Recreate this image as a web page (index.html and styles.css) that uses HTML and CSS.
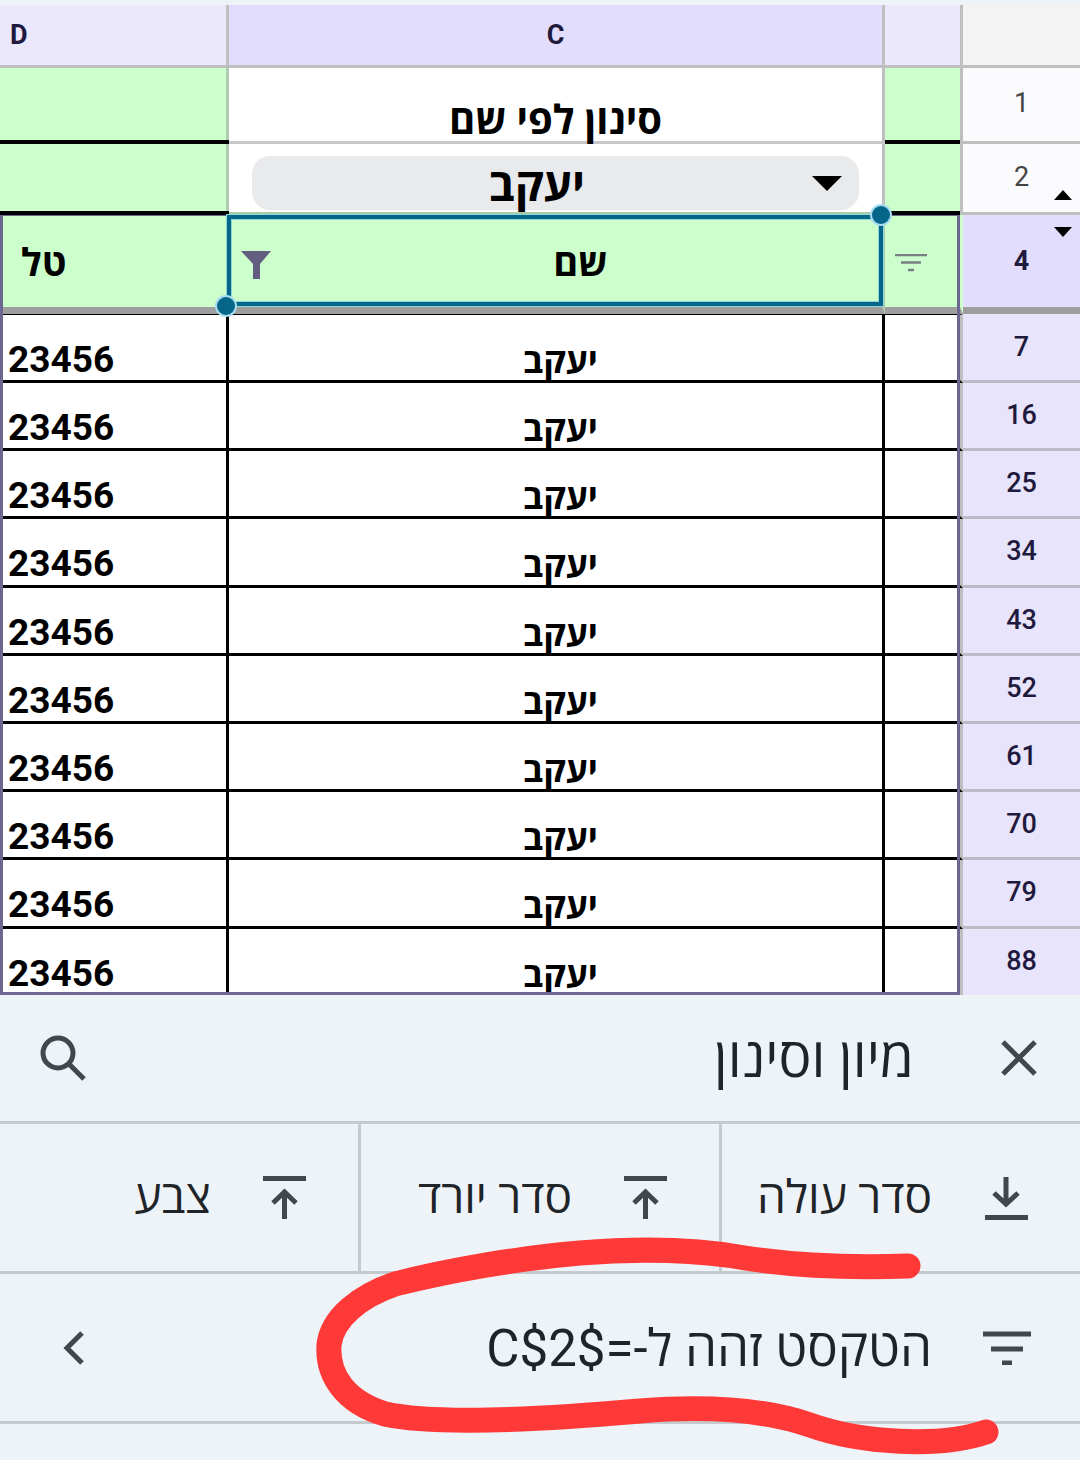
FILE: index.html
```html
<!DOCTYPE html>
<html lang="he">
<head>
    <meta charset="UTF-8">
    <meta name="viewport" content="width=device-width, initial-scale=1.0">
    <title>Sheet - Sort and filter</title>
    <link rel="stylesheet" href="styles.css">
</head>
<body>
<div class="page">
    <section class="sheet">
        <div class="row row-head">
            <div class="cell col-head head-light"><span class="col-letter letter-d">D</span></div>
            <div class="cell col-head head-active"><span class="col-letter">C</span></div>
            <div class="cell col-head head-light"></div>
            <div class="cell col-head corner"></div>
        </div>

        <div class="row row-1">
            <div class="cell green thick"></div>
            <div class="cell title-cell">סינון לפי שם</div>
            <div class="cell green thick"></div>
            <div class="cell num plain"><span>1</span></div>
        </div>

        <div class="row row-2">
            <div class="cell green thick"></div>
            <div class="cell picker-cell">
                <div class="picker">
                    <span class="picker-text">יעקב</span>
                    <span class="picker-arrow"></span>
                </div>
            </div>
            <div class="cell green thick"></div>
            <div class="cell num plain"><span>2</span><i class="hidden-up"></i></div>
        </div>

        <div class="row row-4">
            <div class="cell green head-cell label-tel">טל</div>
            <div class="cell green head-cell label-name">
                <svg class="funnel" viewBox="0 0 30 28"><path d="M0 0h30L19 13v15h-7V13z"/></svg>
                שם
            </div>
            <div class="cell green head-cell label-filter">
                <svg class="filter-small" viewBox="0 0 32 20"><path d="M0 1h32M6 8.500h20M13 16h6"/></svg>
            </div>
            <div class="cell num active"><span>4</span><i class="hidden-down"></i></div>
        </div>

        <div class="data">
            <div class="row data-row"><div class="cell tel">23456</div><div class="cell name">יעקב</div><div class="cell"></div><div class="cell num"><span>7</span></div></div>
            <div class="row data-row"><div class="cell tel">23456</div><div class="cell name">יעקב</div><div class="cell"></div><div class="cell num"><span>16</span></div></div>
            <div class="row data-row"><div class="cell tel">23456</div><div class="cell name">יעקב</div><div class="cell"></div><div class="cell num"><span>25</span></div></div>
            <div class="row data-row"><div class="cell tel">23456</div><div class="cell name">יעקב</div><div class="cell"></div><div class="cell num"><span>34</span></div></div>
            <div class="row data-row"><div class="cell tel">23456</div><div class="cell name">יעקב</div><div class="cell"></div><div class="cell num"><span>43</span></div></div>
            <div class="row data-row"><div class="cell tel">23456</div><div class="cell name">יעקב</div><div class="cell"></div><div class="cell num"><span>52</span></div></div>
            <div class="row data-row"><div class="cell tel">23456</div><div class="cell name">יעקב</div><div class="cell"></div><div class="cell num"><span>61</span></div></div>
            <div class="row data-row"><div class="cell tel">23456</div><div class="cell name">יעקב</div><div class="cell"></div><div class="cell num"><span>70</span></div></div>
            <div class="row data-row"><div class="cell tel">23456</div><div class="cell name">יעקב</div><div class="cell"></div><div class="cell num"><span>79</span></div></div>
            <div class="row data-row"><div class="cell tel">23456</div><div class="cell name">יעקב</div><div class="cell"></div><div class="cell num"><span>88</span></div></div>
        </div>

        <!-- overlays on top of the grid -->
        <div class="filter-range"></div>
        <div class="selection"></div>
        <div class="handle handle-top"></div>
        <div class="handle handle-bottom"></div>
    </section>

    <section class="panel">
        <div class="panel-row panel-title">
            <svg class="icon search" viewBox="0 0 48 48"><circle cx="20" cy="19" r="15"/><path d="M31 30l15 15"/></svg>
            <div class="title-right">
                <span class="title-text">מיון וסינון</span>
                <svg class="icon close" viewBox="0 0 36 36"><path d="M2 2l32 32M34 2L2 34"/></svg>
            </div>
        </div>
        <div class="panel-row panel-actions">
            <div class="action">
                <span>צבע</span>
                <svg class="icon" viewBox="0 0 44 44"><path class="bar" d="M0 2.500h43"/><path d="M21.500 43V17M10 27l11.500-11L33 27"/></svg>
            </div>
            <div class="action">
                <span>סדר יורד</span>
                <svg class="icon" viewBox="0 0 44 44"><path class="bar" d="M0 2.500h43"/><path d="M21.500 43V17M10 27l11.500-11L33 27"/></svg>
            </div>
            <div class="action">
                <span>סדר עולה</span>
                <svg class="icon" viewBox="0 0 44 44"><path d="M22 1v27M10 17l12 11 12-11"/><path class="bar" d="M1 41.500h43"/></svg>
            </div>
        </div>
        <div class="panel-row panel-condition">
            <svg class="icon chevron" viewBox="0 0 22 34"><path d="M19 2L4 17l15 15"/></svg>
            <div class="condition-right">
                <span class="condition-text" dir="rtl">הטקסט זהה ל-=$C$2</span>
                <svg class="icon filter-big" viewBox="0 0 48 34"><path d="M0 3h48M8 18h32M19 32h10"/></svg>
            </div>
        </div>
    </section>

    <!-- red marker drawn over the screenshot -->
    <svg class="scribble" viewBox="0 0 1080 1460">
        <path d="M908 1266C850 1268 790 1265 745 1258C700 1250 640 1248 580 1253C520 1258 450 1270 395 1284C360 1296 332 1318 329 1345C327 1375 345 1402 385 1414C440 1426 560 1418 640 1411C700 1406 760 1408 810 1425C860 1443 940 1448 986 1432"/>
    </svg>
</div>
</body>
</html>
```

FILE: styles.css
```css
* { margin: 0; padding: 0; box-sizing: border-box; }
body { font-family: Roboto, "Open Sans", "Noto Sans", sans-serif; background: #eef3f8; color: #000; }
.page { position: relative; width: 1080px; height: 1460px; overflow: hidden; }

/* sheet grid */
.sheet { position: relative; margin-top: 5px; height: 990px; background: #fff; overflow: hidden; }
.row { display: grid; grid-template-columns: 229px 656px 78px 117px; }
.cell { border-right: 3px solid #bfbfbf; display: flex; align-items: center; justify-content: center; position: relative; }
.cell:last-child { border-right: none; }

.row-head { height: 63px; }
.col-head { border-bottom: 3px solid #bfbfbf; }
.head-light { background: #ebe7fd; }
.head-active { background: #e2ddfc; }
.corner { background: #f3f3f3; }
.col-letter { font-size: 27px; font-weight: 700; color: #1f1a3d; }
.head-light:first-child { justify-content: flex-start; padding-left: 10px; }

.row-1 { height: 76px; }
.row-2 { height: 71px; }
.row-4 { height: 99px; }
.green { background: #ccffcc; border-right-color: #b0ccb0; }
.thick { border-bottom: 4px solid #000; border-right: none; box-shadow: inset -3px 0 0 #b0ccb0; }
.title-cell { border-bottom: 3px solid #c8c8c8; font-size: 40px; font-weight: 700; align-items: flex-end; line-height: 40px; }
.picker-cell { border-bottom: 3px solid #a8cca8; padding: 10px 23px 1px; }
.picker { flex: 1; height: 54px; background: #e9eaec; border-radius: 18px; display: flex; align-items: center; justify-content: center; position: relative; padding-right: 37px; }
.picker-text { font-size: 45px; font-weight: 700; line-height: 54px; padding-top: 6px; }
.picker-arrow { position: absolute; right: 17px; top: 20px; border-left: 15px solid transparent; border-right: 15px solid transparent; border-top: 15px solid #000; }

.num { font-size: 27px; font-weight: 500; color: #1f1a3d; background: #e8e4fb; border-bottom: 3px solid #bdbbc5; }
.plain { background: #fbfbfe; font-weight: 400; color: #444; margin-left: -3px; border-left: 3px solid #bfbfbf; border-bottom-color: #bfbfbf; padding-bottom: 3px; }
.active { background: #e2ddfc; font-weight: 700; border-bottom: 7px solid #9e9e9e; }
.hidden-up { position: absolute; right: 8px; bottom: 12px; border-left: 9px solid transparent; border-right: 9px solid transparent; border-bottom: 10px solid #000; }
.hidden-down { position: absolute; right: 8px; top: 12px; border-left: 9px solid transparent; border-right: 9px solid transparent; border-top: 10px solid #000; }

.head-cell { border-bottom: 7px solid #9e9e9e; font-size: 38px; font-weight: 700; }
.label-tel { justify-content: flex-start; padding-left: 21px; }
.label-name { padding-left: 50px; }
.label-filter { border-right-color: #ccffcc; justify-content: flex-start; padding: 6px 0 0 10px; }
.funnel { position: absolute; left: 12px; top: 36px; width: 30px; height: 28px; fill: #635e80; }
.filter-small { width: 32px; height: 20px; stroke: #7a7f85; stroke-width: 2.500; fill: none; }

/* data rows */
.data-row { height: 68.200px; }
.data-row:first-child { height: 69px; }
.data-row:first-child .cell:not(.num) { border-top: 1px solid #000; }
.data-row .cell { border-bottom: 3px solid #000; border-right-color: #000; align-items: flex-start; }
.data-row .cell:nth-child(3) { border-right-color: #bfbfbf; }
.data-row .num { border-bottom-color: #bdbbc5; padding-top: 16px; }
.data-row:first-child .num { padding-top: 17px; }
.tel, .name { font-weight: 700; line-height: 30px; }
.tel { font-size: 37px; justify-content: flex-start; padding: 30px 0 0 8px; }
.name { font-size: 35px; padding: 32px 0 0 10px; }
.data-row:last-child .cell { border-bottom: none; }

/* things over the grid */
.filter-range { position: absolute; left: 0; top: 210px; width: 960px; height: 780px; border: 3px solid #6d6690; border-top-width: 1px; }
.selection { position: absolute; left: 227px; top: 210px; width: 656px; height: 91px; border: 4px solid #05668a; box-shadow: inset 0 0 0 1px #8fd8d8, 0 0 0 1px #8fd8d8; }
.handle { position: absolute; width: 22px; height: 22px; border-radius: 50%; background: #05668a; border: 2px solid #a8dcf0; }
.handle-top { left: 870px; top: 199px; }
.handle-bottom { left: 215px; top: 290px; }

/* bottom panel */
.panel { background: #eef3f8; color: #1f2428; }
.panel-row { display: flex; align-items: center; justify-content: space-between; border-bottom: 3px solid #c4cacd; }
.icon { fill: none; stroke: #41474d; stroke-width: 5; flex: none; }
.panel-title { height: 129px; padding: 0 43px 0 38px; }
.search { width: 48px; height: 48px; }
.title-right { display: flex; align-items: center; gap: 87px; }
.title-text { font-size: 55px; font-weight: 400; padding-bottom: 6px; }
.close { width: 36px; height: 36px; }
.panel-actions { height: 150px; display: grid; grid-template-columns: 361px 361px 358px; }
.action { display: flex; align-items: center; justify-content: flex-end; gap: 52px; padding-right: 51px; height: 100%; font-size: 46px; font-weight: 400; border-right: 3px solid #c4cacd; }
.action:last-child { border-right: none; padding-right: 52px; }
.action span { padding-bottom: 5px; }
.action .icon { width: 44px; height: 44px; }
.panel-condition { height: 150px; padding: 0 49px 0 63px; font-size: 51px; font-weight: 400; }
.chevron { width: 22px; height: 34px; }
.condition-right { display: flex; align-items: center; gap: 51px; }
.condition-text { padding-bottom: 4px; }
.filter-big { width: 48px; height: 34px; }

.scribble { position: absolute; left: 0; top: 0; width: 1080px; height: 1460px; fill: none; stroke: #ff3838; stroke-width: 25; stroke-linecap: round; stroke-linejoin: round; }
```
